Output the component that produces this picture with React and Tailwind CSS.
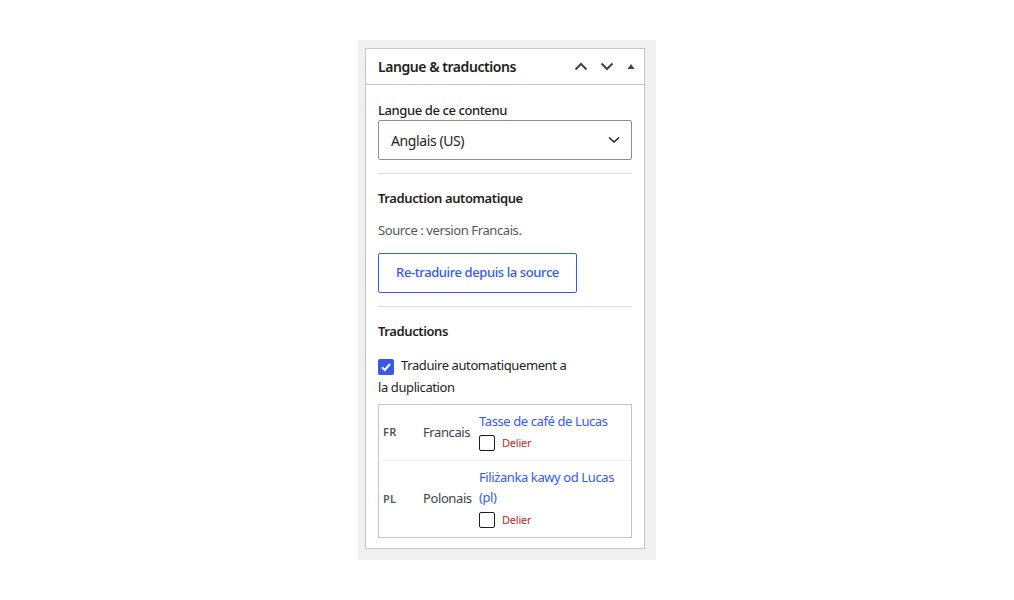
export default function App() {
  const font = { fontFamily: '"Noto Sans", "Open Sans", sans-serif' };
  return (
    <div className="w-full h-[600px] bg-white flex items-center justify-center" style={font}>
      <div className="w-[298px] h-[520px] bg-[#f0f0f0] pl-[7px] pt-[8px]">
        <div className="w-[280px] h-[501px] bg-white border border-[#c3c4c7] flex flex-col">
          <div className="h-[36px] border-b border-[#c3c4c7] flex items-center pl-[12px] pr-[8px]">
            <div className="flex-1 text-[14px] font-semibold text-[#1e1e1e] tracking-[-0.45px]">Langue &amp; traductions</div>
            <div className="flex items-center gap-[12px]">
              <svg width="14" height="9" viewBox="0 0 14 9" fill="none" stroke="#3c434a" strokeWidth="2">
                <path d="M1.5 7.5 L7 2 L12.5 7.5" />
              </svg>
              <svg width="14" height="9" viewBox="0 0 14 9" fill="none" stroke="#3c434a" strokeWidth="2">
                <path d="M1.5 1.5 L7 7 L12.5 1.5" />
              </svg>
              <svg width="10" height="9" viewBox="0 0 10 9" fill="#3c434a">
                <path d="M1.5 7 L5 2 L8.5 7 Z" />
              </svg>
            </div>
          </div>
          <div className="px-[12px] pt-[16px] tracking-[-0.4px]">
            <div className="text-[13px] font-medium text-[#1e1e1e] leading-[18px]">Langue de ce contenu</div>
            <div className="mt-[1px] h-[40px] border border-[#8c8f94] rounded-[2px] flex items-center pl-[12px] pr-[11px]">
              <div className="flex-1 text-[14px] text-[#1e1e1e]">Anglais (US)</div>
              <svg width="12" height="8" viewBox="0 0 12 8" fill="none" stroke="#1e1e1e" strokeWidth="1.5">
                <path d="M1 1.5 L6 6 L11 1.5" />
              </svg>
            </div>
            <div className="mt-[13px] border-t border-[#dcdcde]" />
            <div className="mt-[15px] text-[13px] font-semibold text-[#1e1e1e] leading-[18px]">Traduction automatique</div>
            <div className="mt-[14px] text-[13px] text-[#50575e] leading-[18px]">Source : version Francais.</div>
            <button className="mt-[14px] h-[40px] w-[199px] border border-[#3858e9] rounded-[2px] text-[13px] font-medium text-[#3858e9] bg-white tracking-[-0.4px]">
              Re-traduire depuis la source
            </button>
            <div className="mt-[13px] border-t border-[#dcdcde]" />
            <div className="mt-[15px] text-[13px] font-semibold text-[#1e1e1e] leading-[18px]">Traductions</div>
            <div className="mt-[14px] w-[198px] text-[13px] text-[#1e1e1e] leading-[22px]">
              <span className="inline-flex w-[16px] h-[16px] bg-[#3858e9] rounded-[2px] items-center justify-center align-[-3px] mr-[7px]">
                <svg width="12" height="12" viewBox="0 0 12 12" fill="none" stroke="white" strokeWidth="2">
                  <path d="M2 6.2 L4.8 9 L10 3" />
                </svg>
              </span>
              Traduire automatiquement a la duplication
            </div>
            <div className="mt-[6px] border border-[#c3c4c7]">
              <div className="flex items-center border-b border-[#f0f0f0]">
                <div className="w-[40px] pl-[4px] text-[11px] font-semibold text-[#50575e] tracking-[0.3px]">FR</div>
                <div className="w-[56px] pl-[4px] text-[13px] text-[#3c434a]">Francais</div>
                <div className="flex-1 pl-[4px] pt-[6px] pb-[8px]">
                  <div className="text-[13px] text-[#3858e9] leading-[20px]">Tasse de café de Lucas</div>
                  <div className="mt-[4px] flex items-center gap-[7px]">
                    <span className="w-[16px] h-[16px] border border-[#1e1e1e] rounded-[2px] bg-white" />
                    <span className="text-[11px] text-[#b32d2e] tracking-[-0.2px]">Delier</span>
                  </div>
                </div>
              </div>
              <div className="flex items-center">
                <div className="w-[40px] pl-[4px] text-[11px] font-semibold text-[#50575e] tracking-[0.3px]">PL</div>
                <div className="w-[56px] pl-[4px] text-[13px] text-[#3c434a]">Polonais</div>
                <div className="flex-1 pl-[4px] pt-[6px] pb-[9px] pr-[4px]">
                  <div className="text-[13px] text-[#3858e9] leading-[20px]">Filiżanka kawy od Lucas (pl)</div>
                  <div className="mt-[5px] flex items-center gap-[7px]">
                    <span className="w-[16px] h-[16px] border border-[#1e1e1e] rounded-[2px] bg-white" />
                    <span className="text-[11px] text-[#b32d2e] tracking-[-0.2px]">Delier</span>
                  </div>
                </div>
              </div>
            </div>
          </div>
        </div>
      </div>
    </div>
  );
}
